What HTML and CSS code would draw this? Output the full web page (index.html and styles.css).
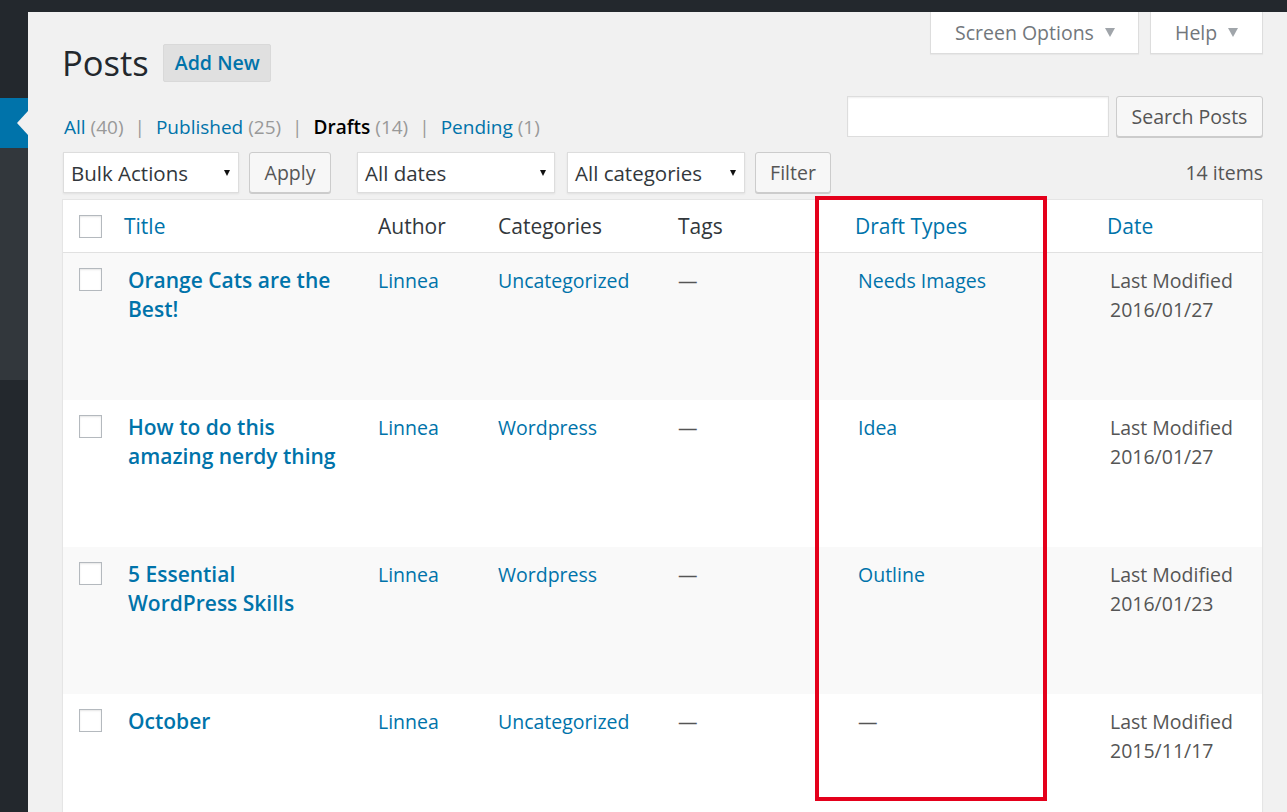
FILE: index.html
```html
<!DOCTYPE html>
<html>
<head>
<meta charset="utf-8">
<title>Posts</title>
<link rel="stylesheet" href="styles.css">
</head>
<body>
<div class="adminbar"></div>
<div class="layout">
  <nav class="sidebar">
    <div class="sb-top"></div>
    <div class="sb-active"><span class="pointer"></span></div>
    <div class="sb-sub"></div>
  </nav>
  <main class="content">
    <div class="row-head">
      <div class="title-block">
        <h1 class="page-title">Posts</h1>
        <a class="add-new">Add New</a>
      </div>
      <div class="meta-links">
        <div class="meta-tab tab-screen">Screen Options <span class="tri"></span></div>
        <div class="meta-tab tab-help">Help <span class="tri"></span></div>
      </div>
    </div>

    <div class="row-views">
      <ul class="subsubsub">
        <li><a>All</a> <span class="count">(40)</span></li>
        <li class="sep">|</li>
        <li><a>Published</a> <span class="count">(25)</span></li>
        <li class="sep">|</li>
        <li><b class="current">Drafts</b> <span class="count">(14)</span></li>
        <li class="sep">|</li>
        <li><a>Pending</a> <span class="count">(1)</span></li>
      </ul>
      <div class="search">
        <div class="search-input"></div>
        <div class="btn btn-search">Search Posts</div>
      </div>
    </div>

    <div class="row-filters">
      <div class="filters">
        <div class="select sel-bulk"><span>Bulk Actions</span><i class="caret"></i></div>
        <div class="btn btn-apply">Apply</div>
        <div class="select sel-dates"><span>All dates</span><i class="caret"></i></div>
        <div class="select sel-cats"><span>All categories</span><i class="caret"></i></div>
        <div class="btn btn-filter">Filter</div>
      </div>
      <div class="items">14 items</div>
    </div>

    <table class="posts">
      <colgroup>
        <col class="c-cb"><col class="c-title"><col class="c-author"><col class="c-cat"><col class="c-tags"><col class="c-draft"><col class="c-date">
      </colgroup>
      <thead>
        <tr>
          <th class="cb"><span class="checkbox"></span></th>
          <th class="link">Title</th>
          <th>Author</th>
          <th>Categories</th>
          <th>Tags</th>
          <th class="link">Draft Types</th>
          <th class="link">Date</th>
        </tr>
      </thead>
      <tbody>
        <tr class="alt">
          <td class="cb"><span class="checkbox"></span></td>
          <td class="title"><a>Orange Cats are the Best!</a></td>
          <td><a>Linnea</a></td>
          <td><a>Uncategorized</a></td>
          <td class="dash">—</td>
          <td class="draft"><a>Needs Images</a></td>
          <td class="date">Last Modified<br>2016/01/27</td>
        </tr>
        <tr>
          <td class="cb"><span class="checkbox"></span></td>
          <td class="title"><a>How to do this amazing nerdy thing</a></td>
          <td><a>Linnea</a></td>
          <td><a>Wordpress</a></td>
          <td class="dash">—</td>
          <td class="draft"><a>Idea</a></td>
          <td class="date">Last Modified<br>2016/01/27</td>
        </tr>
        <tr class="alt">
          <td class="cb"><span class="checkbox"></span></td>
          <td class="title"><a>5 Essential WordPress Skills</a></td>
          <td><a>Linnea</a></td>
          <td><a>Wordpress</a></td>
          <td class="dash">—</td>
          <td class="draft"><a>Outline</a></td>
          <td class="date">Last Modified<br>2016/01/23</td>
        </tr>
        <tr>
          <td class="cb"><span class="checkbox"></span></td>
          <td class="title"><a>October</a></td>
          <td><a>Linnea</a></td>
          <td><a>Uncategorized</a></td>
          <td class="dash">—</td>
          <td class="draft dash">—</td>
          <td class="date">Last Modified<br>2015/11/17</td>
        </tr>
      </tbody>
    </table>
  </main>
</div>
<div class="highlight"></div>
</body>
</html>
```

FILE: styles.css
```css
* { box-sizing: border-box; }
html, body { margin: 0; padding: 0; }
body {
  background: #f1f1f1;
  font-family: "Open Sans", "Noto Sans", sans-serif;
  color: #32373c;
  font-size: 19.5px;
  height: 812px;
  overflow: hidden;
}
a { color: #0073aa; text-decoration: none; }

.adminbar { height: 12px; background: #23282d; }

.layout { display: flex; min-height: 800px; }

.sidebar {
  width: 28px;
  flex: none;
  background: #23282d;
  display: flex;
  flex-direction: column;
}
.sb-top { height: 86px; }
.sb-active { height: 50px; background: #0073aa; position: relative; }
.pointer {
  position: absolute;
  right: 0;
  top: 13px;
  width: 0; height: 0;
  border-top: 12px solid transparent;
  border-bottom: 12px solid transparent;
  border-right: 11px solid #f1f1f1;
}
.sb-sub { height: 232px; background: #32373c; }

.content {
  flex: 1;
  padding: 0 24px 0 34px;
}

/* header row */
.row-head {
  display: flex;
  justify-content: space-between;
  align-items: flex-start;
}
.title-block {
  display: flex;
  align-items: center;
  margin-top: 32px;
  gap: 14px;
}
.page-title {
  margin: 0;
  font-weight: 400;
  font-size: 34.5px;
  line-height: 38px;
  color: #23282d;
}
.add-new {
  display: block;
  background: #e0e0e0;
  border: 1px solid #d9d9d9;
  border-radius: 2px;
  height: 38px;
  line-height: 36px;
  padding: 0 10px 0 11px;
  font-weight: 600;
  font-size: 19.6px;
}
.meta-links { display: flex; gap: 11px; }
.meta-tab {
  height: 42px;
  background: #fff;
  border: 1px solid #ddd;
  border-top: none;
  box-shadow: 0 1px 1px rgba(0,0,0,.04);
  color: #72777c;
  font-size: 19.5px;
  line-height: 42px;
  padding: 0 0 0 24px;
  display: flex;
  align-items: center;
  gap: 11px;
  white-space: nowrap;
}
.tab-screen { width: 209px; }
.tab-help { width: 113px; }
.tri {
  width: 0; height: 0;
  border-left: 5.5px solid transparent;
  border-right: 5.5px solid transparent;
  border-top: 9px solid #a0a5aa;
}

/* views + search */
.row-views {
  display: flex;
  justify-content: space-between;
  align-items: flex-end;
  margin-top: 14px;
}
.subsubsub {
  list-style: none;
  margin: 0;
  padding: 0 0 0 2px;
  display: flex;
  gap: 11px;
  line-height: 20px;
  font-size: 19px;
}
.subsubsub li { white-space: nowrap; }
.subsubsub .count { color: #999; }
.subsubsub .sep { color: #999; }
.subsubsub .current { color: #000; font-weight: 600; }

.search { display: flex; gap: 7px; }
.search-input {
  width: 262px;
  height: 41px;
  background: #fff;
  border: 1px solid #ddd;
  box-shadow: inset 0 1px 2px rgba(0,0,0,.07);
}
.btn {
  height: 41px;
  background: #f7f7f7;
  border: 1px solid #ccc;
  border-radius: 3px;
  box-shadow: 0 1px 0 #ccc;
  color: #555;
  font-size: 19.5px;
  line-height: 39px;
  text-align: center;
}
.btn-search { width: 147px; }

/* filters */
.row-filters {
  display: flex;
  justify-content: space-between;
  align-items: center;
  margin-top: 15px;
}
.filters { display: flex; align-items: center; }
.select {
  height: 41px;
  background: #fff;
  border: 1px solid #ddd;
  box-shadow: 0 1px 2px rgba(0,0,0,.07);
  display: flex;
  align-items: center;
  justify-content: space-between;
  padding: 0 7px 0 7px;
  font-size: 20.5px;
  color: #32373c;
}
.caret {
  width: 0; height: 0;
  border-left: 3.5px solid transparent;
  border-right: 3.5px solid transparent;
  border-top: 6px solid #111;
  margin-right: 1px;
}
.sel-bulk { width: 176px; margin-left: 1px; }
.btn-apply { width: 82px; margin-left: 10px; }
.sel-dates { width: 198px; margin-left: 26px; }
.sel-cats { width: 178px; margin-left: 12px; }
.btn-filter { width: 76px; margin-left: 10px; }
.items { color: #555; font-size: 19.5px; }

/* table */
.posts {
  margin-top: 6px;
  width: 1201px;
  table-layout: fixed;
  border-spacing: 0;
  border: 1px solid #e5e5e5;
  background: #fff;
  box-shadow: 0 1px 1px rgba(0,0,0,.04);
}
.c-cb { width: 49px; }
.c-title { width: 254px; }
.c-author { width: 120px; }
.c-cat { width: 180px; }
.c-tags { width: 177px; }
.c-draft { width: 252px; }
.c-date { width: 167px; }

.posts th {
  height: 53px;
  border-bottom: 1px solid #e1e1e1;
  text-align: left;
  font-weight: 400;
  font-size: 21px;
  color: #32373c;
  padding: 0 0 0 12px;
  vertical-align: middle;
}
.posts th.link { color: #0073aa; }
.posts th.cb { padding-left: 16px; }

.posts td {
  height: 147px;
  vertical-align: top;
  padding: 13px 8px 0 12px;
  line-height: 29px;
  font-size: 19.5px;
}
.posts tr.alt td { background: #f9f9f9; }
.posts td.cb { padding: 15px 0 0 16px; }
.posts td.title { padding-left: 16px; padding-right: 24px; }
.posts td.title a { font-weight: 600; font-size: 21px; }
.posts td.draft { padding-left: 15px; }
.posts td.date { padding-left: 15px; color: #555; font-size: 19.5px; }
.posts td.dash { color: #555; }

.checkbox {
  display: block;
  width: 23px;
  height: 23px;
  background: #fff;
  border: 1px solid #b4b9be;
  box-shadow: inset 0 1px 2px rgba(0,0,0,.1);
}

/* annotation overlay */
.highlight {
  position: absolute;
  left: 815px;
  top: 196px;
  width: 232px;
  height: 605px;
  border: 4px solid #e4001b;
  pointer-events: none;
}
```
